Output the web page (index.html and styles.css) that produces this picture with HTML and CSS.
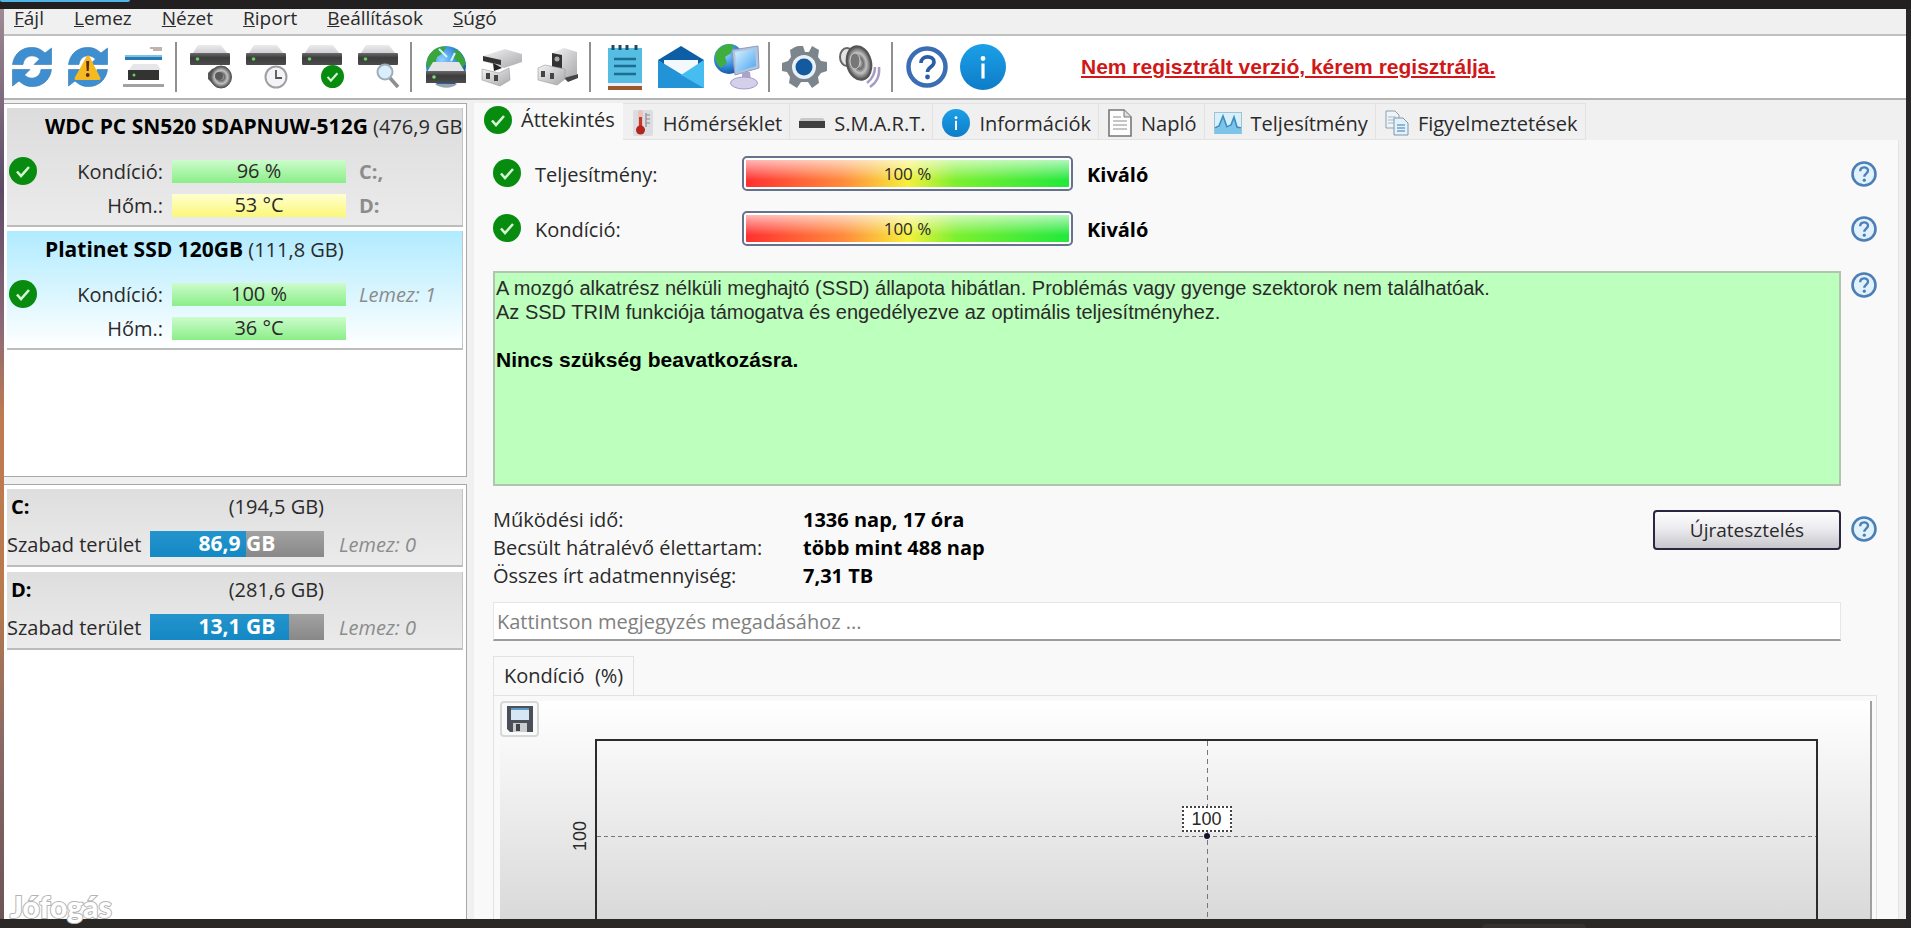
FILE: index.html
```html
<!DOCTYPE html>
<html lang="hu">
<head>
<meta charset="utf-8">
<title>Lemez állapot</title>
<link rel="stylesheet" href="styles.css">
</head>
<body>
<svg class="defs" aria-hidden="true">
  <defs>
    <linearGradient id="gBlue" x1="0" y1="0" x2="0" y2="1"><stop offset="0" stop-color="#1aa0e8"/><stop offset="1" stop-color="#0f7cc8"/></linearGradient>
    <linearGradient id="gDrive" x1="0" y1="0" x2="0" y2="1"><stop offset="0" stop-color="#6a6a6a"/><stop offset=".4" stop-color="#3c3c3c"/><stop offset="1" stop-color="#4c4c4c"/></linearGradient>
    <linearGradient id="gLight" x1="0" y1="0" x2="0" y2="1"><stop offset="0" stop-color="#ececee"/><stop offset="1" stop-color="#d0d0d4"/></linearGradient>
    <linearGradient id="gMetal" x1="0" y1="0" x2="1" y2="1"><stop offset="0" stop-color="#f4f4f4"/><stop offset="1" stop-color="#a8a8ac"/></linearGradient>
    <radialGradient id="gGlobe" cx=".4" cy=".35" r=".7"><stop offset="0" stop-color="#8fd0ff"/><stop offset=".6" stop-color="#2f86d8"/><stop offset="1" stop-color="#174f9a"/></radialGradient>
    <radialGradient id="gCone"><stop offset="0" stop-color="#d8d8d8"/><stop offset=".35" stop-color="#6c6c6c"/><stop offset=".6" stop-color="#c2c2c2"/><stop offset="1" stop-color="#4c4c4c"/></radialGradient>
    <linearGradient id="gScreen" x1="0" y1="0" x2="1" y2="1"><stop offset="0" stop-color="#d8f2ff"/><stop offset="1" stop-color="#4aa4f0"/></linearGradient>
  </defs>
  <symbol id="check" viewBox="0 0 28 28"><circle cx="14" cy="14" r="14" fill="#078c10"/><path d="M8 14.500l4 4.500 8-9" fill="none" stroke="#d6f5d0" stroke-width="2.600"/></symbol>
  <symbol id="help" viewBox="0 0 26 26"><circle cx="13" cy="13" r="11.500" fill="#e2f2fd" stroke="#4b7fb5" stroke-width="2.600"/><path d="M9.200 10.200c0-5 7.800-5 7.800-.6 0 3-3.700 3-3.700 6.200" fill="none" stroke="#4b7fb5" stroke-width="2.400"/><circle cx="13.300" cy="19.200" r="1.600" fill="#4b7fb5"/></symbol>
  <symbol id="info" viewBox="0 0 46 46"><circle cx="23" cy="23" r="23" fill="url(#gBlue)"/><circle cx="23" cy="14.500" r="2.400" fill="#fff"/><path d="M23 19.500v15" stroke="#fff" stroke-width="3.200"/></symbol>
  <symbol id="refresh" viewBox="0 0 40 40"><g fill="#3f8fd0" stroke="#2f77b4" stroke-width=".6"><path d="M.5 17.500C2 6 11 0 20 .5c6 0 9 2 13 5.500L39.500 1v16.500H22l5.500-5.500C21 6 12 9 11 17.500z"/><path d="M39.500 22.500C38 34 29 40 20 39.500c-6 0-9-2-13-5.500L.5 39V22.500H18L12.500 28C19 34 28 31 29 22.500z"/></g></symbol>
  <symbol id="drive" viewBox="0 0 40 20"><path d="M8 0h23l6 8H3z" fill="url(#gLight)"/><rect y="8" width="40" height="12" rx="1" fill="url(#gDrive)"/><circle cx="7.500" cy="14" r="1.800" fill="#5fd35a"/></symbol>
</svg>

<div class="desktop">
  <div class="top-edge"><span class="edge-tab"></span></div>
  <div class="window">
    <nav class="menu">
      <button><u>F</u>ájl</button><button><u>L</u>emez</button><button><u>N</u>ézet</button><button><u>R</u>iport</button><button><u>B</u>eállítások</button><button><u>S</u>úgó</button>
    </nav>

    <div class="toolbar">
      <button aria-label="Frissítés"><svg width="40" height="40"><use href="#refresh"/></svg></button>
      <button aria-label="Figyelmeztetés"><svg width="40" height="40" viewBox="0 0 40 40"><use href="#refresh"/><path d="M20 10L31 31.500H8z" fill="#f5b921" stroke="#f5b921" stroke-width="3" stroke-linejoin="round"/><path d="M18.200 14h3l-.5 10h-2z" fill="#5b2a10"/><circle cx="19.700" cy="28" r="1.900" fill="#5b2a10"/></svg></button>
      <button aria-label="Lemezek"><svg width="42" height="42" viewBox="0 0 42 42"><path d="M27 2h12M30 4h9" stroke="#b09a94" stroke-width="1.500"/><rect x="2" y="9" width="37" height="5" fill="#2b79b0"/><rect x="2" y="9" width="37" height="2" fill="#7cc3ea"/><path d="M10 18h24l4 6H6z" fill="#e6e6e8"/><rect x="5" y="24" width="31" height="10" fill="#333"/><circle cx="11" cy="29" r="1.500" fill="#5fd35a"/><rect x="0" y="38" width="41" height="3" fill="#a2a2a2"/></svg></button>
      <span class="sep"></span>
      <button aria-label="Hang"><svg width="42" height="44" viewBox="0 0 42 44"><use href="#drive" width="40" height="20"/><path d="M18 28l4-4 8-3v22l-8-5-4-4z" fill="#555"/><ellipse cx="31" cy="32" rx="10.500" ry="11" fill="url(#gCone)" stroke="#555"/><circle cx="29" cy="31" r="4" fill="#5a5a5a"/></svg></button>
      <button aria-label="Ütemezés"><svg width="42" height="44" viewBox="0 0 42 44"><use href="#drive" width="40" height="20"/><circle cx="30" cy="32" r="10.500" fill="#f4f4f6" stroke="#a0a0a4" stroke-width="2"/><path d="M30 25v8h6" fill="none" stroke="#555" stroke-width="1.800"/></svg></button>
      <button aria-label="Ellenőrzés"><svg width="42" height="44" viewBox="0 0 42 44"><use href="#drive" width="40" height="20"/><use href="#check" x="19" y="20" width="23" height="23"/></svg></button>
      <button aria-label="Keresés"><svg width="42" height="44" viewBox="0 0 42 44"><use href="#drive" width="40" height="20"/><path d="M32 33l8 9" stroke="#8f8f93" stroke-width="3.500"/><circle cx="27" cy="27" r="7.500" fill="#d9effc" stroke="#9dadba" stroke-width="2"/></svg></button>
      <span class="sep"></span>
      <button aria-label="Hálózat"><svg width="42" height="44" viewBox="0 0 42 44"><circle cx="21" cy="21" r="20" fill="url(#gGlobe)"/><path d="M3 12C8 3 16 0 21 2l-3 6-6 4-2 7-8 4c-1-4 0-8 1-11zM30 4c6 3 9 8 11 15l-5 4-4-7-4-4z" fill="#3aa53a"/><path d="M14 4l8 8M30 8l-4 8" stroke="#d7f2ff" stroke-width="2"/><path d="M8 17h26l6 10H2z" fill="#e3e4e8"/><rect x="1" y="26" width="40" height="12" fill="url(#gDrive)"/><circle cx="9" cy="32" r="1.800" fill="#7be070"/><path d="M10 39c6 5 17 5 22 0z" fill="#9aa4ae"/></svg></button>
      <button aria-label="Kábel"><svg width="42" height="40" viewBox="0 0 42 40"><path d="M2 9L24 2l17 5v8l-18 6L2 14z" fill="url(#gMetal)"/><path d="M2 9l18 4v5L2 14z" fill="#333"/><path d="M12 16l9 5-8 3z" fill="#222"/><path d="M1 22l17 4 10-5 1 12-10 6L1 33z" fill="url(#gMetal)" stroke="#999" stroke-width=".6"/><rect x="5" y="26" width="4" height="6" fill="#444"/><rect x="13" y="28" width="4" height="6" fill="#444"/></svg></button>
      <button aria-label="Csatlakozó"><svg width="42" height="40" viewBox="0 0 42 40"><path d="M15 6l12-5 13 4v22l-14 5-11-6z" fill="url(#gMetal)"/><path d="M15 6l10 2v14l-10-2z" fill="#333"/><circle cx="20" cy="12" r="2.500" fill="#aaa"/><path d="M27 31l14-4v4l-10 4z" fill="#444"/><path d="M1 21l7-3 20 4v10l-8 6L1 33z" fill="url(#gMetal)" stroke="#999" stroke-width=".6"/><rect x="4" y="24" width="4" height="6" fill="#444"/><rect x="13" y="26" width="4" height="6" fill="#444"/></svg></button>
      <span class="sep"></span>
      <button aria-label="Jegyzet"><svg width="36" height="46" viewBox="0 0 36 46"><rect x="1" y="4" width="34" height="38" fill="#55bde2"/><path d="M6 1v5M13 1v5M20 1v5M29 1v5" stroke="#1b4c66" stroke-width="3"/><path d="M7 15h22M7 22h22M7 30h22" stroke="#1c6d91" stroke-width="2.400"/><rect x="1" y="39" width="34" height="3" fill="#eef"/><rect x="1" y="42" width="34" height="4" fill="#9a5a2c"/></svg></button>
      <button aria-label="Levél"><svg width="46" height="44" viewBox="0 0 46 44"><path d="M0 15L23 1l23 14v10H0z" fill="#0e5ea6"/><path d="M6 15h34v14H6z" fill="#f2f8fc"/><path d="M0 15l23 17L46 15v28H0z" fill="#38aee6"/><path d="M0 15l23 14 23 14H0z" fill="#2393d8"/><path d="M46 15v28L23 30z" fill="#45bdf0"/></svg></button>
      <button aria-label="Távoli gép"><svg width="46" height="46" viewBox="0 0 46 46"><circle cx="15" cy="15" r="15" fill="url(#gGlobe)"/><path d="M2 8C7 1 14-1 20 1l-3 8-6 4 2 6-6 5c-5-4-7-11-5-16z" fill="#3fae3c"/><path d="M18 6l26-4 1 22-24 7z" fill="#b4c4dc" stroke="#8b9cc0"/><path d="M21 8l20-3 1 17-19 6z" fill="url(#gScreen)"/><path d="M28 28h8l1 8h-9z" fill="#a9a6cc"/><ellipse cx="30" cy="39" rx="13.500" ry="6" fill="#d5d0ea" stroke="#a39cc4"/></svg></button>
      <span class="sep"></span>
      <button aria-label="Beállítások"><svg width="46" height="44" viewBox="0 0 46 44"><path d="M17 1h5l2 6h4l3-6 7 4-1 7 3 4 6 1v9l-6 2-3 4 1 6-7 5-4-6h-7l-4 6-8-5 1-6-3-5-5-1v-8l6-2 3-4-1-7 5-3z" fill="#7d858c"/><circle cx="23" cy="22" r="12" fill="#e8f1fa"/><circle cx="23" cy="22" r="8.500" fill="#135a9e"/></svg></button>
      <button aria-label="Hangszóró"><svg width="46" height="44" viewBox="0 0 46 44"><path d="M30 38c5-4 8-9 8-16M33 42c6-4 10-11 9-20" fill="none" stroke="#a79cc4" stroke-width="2.500"/><ellipse cx="10" cy="12" rx="7" ry="9" fill="#e4e4e4" stroke="#666" stroke-width="2"/><ellipse cx="22" cy="18" rx="12" ry="17" transform="rotate(-14 22 18)" fill="url(#gCone)" stroke="#555" stroke-width="2"/><ellipse cx="18" cy="16" rx="5" ry="8" fill="#777" stroke="#ccc"/></svg></button>
      <span class="sep"></span>
      <button aria-label="Súgó"><svg width="42" height="42" viewBox="0 0 42 42"><circle cx="21" cy="21" r="18.500" fill="#fff" stroke="#3b6db5" stroke-width="4.500"/><path d="M15 17c0-8 13-8 13-1 0 5-6.500 5-6.500 10" fill="none" stroke="#2a5ca8" stroke-width="3.600"/><circle cx="21.500" cy="31" r="2.400" fill="#2a5ca8"/></svg></button>
      <button aria-label="Névjegy"><svg width="46" height="46"><use href="#info"/></svg></button>
      <a class="register" href="#">Nem regisztrált verzió, kérem regisztrálja.</a>
    </div>

    <div class="content">
      <aside class="side">
        <section class="list disks">
          <article class="disk">
            <h2><b>WDC PC SN520 SDAPNUW-512G</b> (476,9 GB)</h2>
            <svg class="state" width="28" height="28"><use href="#check"/></svg>
            <span class="lab">Kondíció:</span><span class="meter good">96 %</span><b class="drv">C:,</b>
            <span class="lab">Hőm.:</span><span class="meter warm">53 °C</span><b class="drv">D:</b>
          </article>
          <article class="disk selected">
            <h2><b>Platinet SSD 120GB</b> (111,8 GB)</h2>
            <svg class="state" width="28" height="28"><use href="#check"/></svg>
            <span class="lab">Kondíció:</span><span class="meter good">100 %</span><i class="num">Lemez: 1</i>
            <span class="lab">Hőm.:</span><span class="meter good">36 °C</span><span></span>
          </article>
        </section>
        <section class="list parts">
          <article class="part">
            <b>C:</b><span class="size">(194,5 GB)</span><span></span>
            <span>Szabad terület</span><span class="usage"><span class="fill" style="width:55%"></span><b>86,9 GB</b></span><i class="num">Lemez: 0</i>
          </article>
          <article class="part">
            <b>D:</b><span class="size">(281,6 GB)</span><span></span>
            <span>Szabad terület</span><span class="usage"><span class="fill" style="width:80%"></span><b>13,1 GB</b></span><i class="num">Lemez: 0</i>
          </article>
        </section>
      </aside>

      <main class="main">
        <div class="tabs" role="tablist">
          <button class="tab active" role="tab"><svg width="28" height="28"><use href="#check"/></svg>Áttekintés</button>
          <button class="tab" role="tab"><svg width="22" height="28" viewBox="0 0 22 28"><rect x="1" y="1" width="20" height="26" rx="2" fill="#dcdde0"/><path d="M14 4v14M14 6h4M14 10h4M14 14h4" stroke="#8c8c90" stroke-width="1.200"/><rect x="6" y="1" width="5" height="19" rx="2" fill="#e9c2bd"/><rect x="7" y="8" width="3" height="12" fill="#c0392b"/><circle cx="8.500" cy="21" r="4.500" fill="#b3261c"/></svg>Hőmérséklet</button>
          <button class="tab" role="tab"><svg width="26" height="10" viewBox="0 0 26 10"><path d="M2 0h22l2 3H0z" fill="#c8c8c8"/><rect y="3" width="26" height="7" fill="#404040"/></svg>S.M.A.R.T.</button>
          <button class="tab" role="tab"><svg width="28" height="28"><use href="#info"/></svg>Információk</button>
          <button class="tab" role="tab"><svg width="24" height="28" viewBox="0 0 24 28"><path d="M1 1h15l7 7v19H1z" fill="#fdfdfd" stroke="#77777b" stroke-width="1.600"/><path d="M16 1v7h7" fill="#ddd" stroke="#77777b"/><path d="M5 8h8M5 12h14M5 16h14M5 20h14" stroke="#b4b4b8" stroke-width="1.400"/></svg>Napló</button>
          <button class="tab" role="tab"><svg width="28" height="22" viewBox="0 0 28 22"><rect x=".5" y=".5" width="27" height="21" fill="#d9f0fb" stroke="#9cc4d8"/><path d="M1 17l4-2 4-10 4 11 4-2 3-9 3 10 4 2v5H1z" fill="#7cc4ea"/><path d="M1 16l4-2 4-10 4 11 4-2 3-8 3 10 4 1" fill="none" stroke="#3a8cc0" stroke-width="1.600"/></svg>Teljesítmény</button>
          <button class="tab" role="tab"><svg width="24" height="26" viewBox="0 0 24 26"><path d="M1 1h9l4 4v13H1z" fill="#eef4f8" stroke="#8aa0b0"/><path d="M3 7h8M3 10h8M3 13h8" stroke="#a4b8c6"/><path d="M9 8h9l5 5v12H9z" fill="#e4f1fa" stroke="#7c98ac"/><path d="M12 15h8M12 18h8M12 21h8" stroke="#6fa4c8" stroke-width="1.400"/></svg>Figyelmeztetések</button>
        </div>

        <div class="panel">
          <div class="score">
            <svg width="28" height="28"><use href="#check"/></svg><span class="name">Teljesítmény:</span><span class="rainbow">100 %</span><b>Kiváló</b>
          </div>
          <button class="help" aria-label="Súgó"><svg width="26" height="26"><use href="#help"/></svg></button>
          <div class="score">
            <svg width="28" height="28"><use href="#check"/></svg><span class="name">Kondíció:</span><span class="rainbow">100 %</span><b>Kiváló</b>
          </div>
          <button class="help" aria-label="Súgó"><svg width="26" height="26"><use href="#help"/></svg></button>

          <div class="report">
            <p>A mozgó alkatrész nélküli meghajtó (SSD) állapota hibátlan. Problémás vagy gyenge szektorok nem találhatóak.<br>Az SSD TRIM funkciója támogatva és engedélyezve az optimális teljesítményhez.</p>
            <p><b>Nincs szükség beavatkozásra.</b></p>
          </div>
          <button class="help report-help" aria-label="Súgó"><svg width="26" height="26"><use href="#help"/></svg></button>

          <div class="facts">
            <dl>
              <dt>Működési idő:</dt><dd>1336 nap, 17 óra</dd>
              <dt>Becsült hátralévő élettartam:</dt><dd>több mint 488 nap</dd>
              <dt>Összes írt adatmennyiség:</dt><dd>7,31 TB</dd>
            </dl>
            <button class="retest">Újratesztelés</button>
          </div>
          <button class="help retest-help" aria-label="Súgó"><svg width="26" height="26"><use href="#help"/></svg></button>

          <input class="note" type="text" aria-label="Megjegyzés" placeholder="Kattintson megjegyzés megadásához ...">

          <div class="chart-box">
            <div class="chart-tab">Kondíció&nbsp; (%)</div>
            <div class="chart-frame">
              <div class="chart">
                <button class="save" aria-label="Mentés"><svg width="26" height="26" viewBox="0 0 26 26"><path d="M0 0h26v26H3l-3-3z" fill="#4b5058"/><rect x="4" y="2" width="18" height="12" fill="#d6e6f2"/><rect x="4" y="2" width="18" height="2" fill="#5a9ac8"/><rect x="6" y="17" width="14" height="9" fill="#c9ccd0"/><rect x="9" y="18" width="4" height="7" fill="#444"/></svg></button>
                <div class="axis"><span>100</span></div>
                <div class="plot">
                  <span class="hline"></span><span class="vline"></span><span class="dot"></span><span class="value">100</span>
                </div>
              </div>
            </div>
          </div>
        </div>
      </main>
    </div>
  </div>
  <div class="bottom-edge"><span class="edge-bump"></span></div>
  <span class="watermark">Jófogás</span>
</div>
</body>
</html>
```
FILE: styles.css
```css
* { box-sizing: border-box; }

body {
  margin: 0;
  font-family: "Open Sans", "Noto Sans", sans-serif;
  font-size: 20px;
  color: #2a2a2a;
}

button {
  font: inherit;
  color: inherit;
  background: none;
  border: 0;
  padding: 0;
}

svg { display: block; flex: none; }
.defs { position: absolute; width: 0; height: 0; }

.desktop {
  position: relative;
  height: 100vh;
  display: flex;
  flex-direction: column;
  background: #2a2727;
  overflow: hidden;
}

.top-edge { height: 9px; flex: none; background: #211f1f; }
.edge-tab { display: block; width: 130px; height: 2px; background: #4fb4e8; border-radius: 0 0 4px 4px; }
.bottom-edge { height: 9px; flex: none; display: flex; justify-content: flex-end; align-items: flex-end; padding-right: 17%; }
.edge-bump { width: 104px; height: 4px; background: #343131; border-radius: 4px 4px 0 0; }

.window {
  flex: 1;
  min-height: 0;
  display: flex;
  flex-direction: column;
  margin-right: 5px;
  background: #f0f0f0;
  border-left: 4px solid;
  border-image: linear-gradient(#a08a94, #5d4a66 20%, #8c6a78 35%, #c07a50 45%, #b87a4c 65%, #8a6a64 80%, #6c5458) 1;
}

/* menu and toolbar */
.menu {
  height: 27px;
  flex: none;
  display: flex;
  align-items: center;
  gap: 30px;
  padding: 0 10px 8px;
  border-bottom: 2px solid #c0c0c0;
  font-size: 19px;
  line-height: 18px;
}

.toolbar {
  height: 64px;
  flex: none;
  display: flex;
  align-items: center;
  background: #fff;
  border-bottom: 2px solid #b4b4b4;
}
.toolbar button { width: 56px; display: flex; justify-content: center; flex: none; }
.sep { width: 11px; flex: none; height: 50px; background: linear-gradient(#909090, #909090) 3px 0 / 2px 100% no-repeat; }
.register {
  margin-left: 70px;
  font: bold 21px "Liberation Sans", Arial, sans-serif;
  color: #d01818;
  white-space: nowrap;
}

/* left side */
.content { flex: 1; min-height: 0; display: flex; padding-top: 3px; }
.side { width: 463px; flex: none; display: flex; flex-direction: column; gap: 7px; }
.list {
  background: #fff;
  border: 1px solid #a8a8a8;
  border-width: 1px 1px 1px 0;
  padding: 4px 3px 0;
}
.disks { height: 374px; flex: none; }
.parts { flex: 1; border-bottom: 0; }

.disk {
  display: grid;
  grid-template-columns: 28px 117px 174px 1fr;
  grid-template-rows: 46px 34px 34px;
  column-gap: 9px;
  align-items: center;
  height: 119px;
  margin-bottom: 4px;
  padding-left: 2px;
  background: linear-gradient(#dcdcdc, #ebebeb);
  border-bottom: 2px solid #bcbcbc;
  border-right: 1px solid #c4c4c4;
  overflow: hidden;
}
.disk.selected { background: linear-gradient(#b0ebff, #fff); }
.disk h2 {
  grid-column: 1 / -1;
  align-self: start;
  margin: 0;
  padding-left: 36px;
  font-size: inherit;
  font-weight: normal;
  line-height: 36px;
  white-space: nowrap;
}
.disk h2 b { font-size: 21px; }
.disk h2 b, .part > b { color: #000; }
.disk .state { grid-column: 1; grid-row: 2; }
.disk .lab { grid-column: 2; text-align: right; }
.meter { height: 23px; line-height: 22px; text-align: center; }
.good { background: linear-gradient(#ccfccc, #8bee88); }
.warm { background: linear-gradient(#ffffd0, #fbf878); }
.drv, .num { padding-left: 4px; color: #8c8c8c; }

.part {
  display: grid;
  grid-template-columns: 134px 174px 1fr;
  grid-template-rows: 35px 40px;
  column-gap: 9px;
  align-items: center;
  height: 78px;
  margin-bottom: 5px;
  background: linear-gradient(#dedede, #ebebeb);
  border-bottom: 2px solid #bcbcbc;
  border-right: 1px solid #c4c4c4;
  white-space: nowrap;
}
.part > b { padding-left: 4px; }
.part .num { padding-left: 6px; }
.size { text-align: right; }
.usage {
  position: relative;
  height: 26px;
  line-height: 25px;
  text-align: center;
  color: #fff;
  background: linear-gradient(#a2a2a2, #888);
}
.usage .fill { position: absolute; inset: 0 auto 0 0; background: linear-gradient(#2494cc, #1488c4); }
.usage b { position: relative; font-size: 21px; }

/* right side */
.main { flex: 1; min-width: 0; display: flex; flex-direction: column; margin: 0 7px 0 7px; }
.tabs { display: flex; flex: none; height: 37px; align-items: stretch; }
.tab {
  display: flex;
  align-items: center;
  gap: 9px;
  padding: 3px 7px 0 9px;
  border: 1px solid #e2e2e2;
  border-left: 0;
  white-space: nowrap;
}
.tab.active { background: #f9f9f9; border-color: #f9f9f9; padding: 0 7px 4px 10px; }

.panel {
  flex: 1;
  min-height: 0;
  display: grid;
  grid-template-columns: 1fr 26px;
  grid-template-rows: 55px 55px 230px 116px 39px 1fr;
  column-gap: 10px;
  padding: 6px 21px 0 19px;
  background: #f9f9f9;
  border-right: 1px solid #e4e4e4;
}
.score { display: flex; align-items: center; padding-bottom: 1px; }
.score .name { width: 207px; margin-left: 14px; padding-top: 3px; }
.score b { margin-left: 14px; padding-top: 3px; color: #000; }
.rainbow {
  width: 331px;
  height: 35px;
  border: 2px solid #66728a;
  border-radius: 5px;
  padding: 2px;
  line-height: 27px;
  font-size: 17px;
  text-align: center;
  background:
    linear-gradient(rgba(255,255,255,.65), rgba(255,255,255,0) 75%) content-box,
    linear-gradient(90deg, #ff3030, #ff8a3c 30%, #f6f03c 50%, #7cf030 65%, #22e83c) content-box,
    #fff;
}
.help { align-self: center; }

.report {
  margin-top: 15px;
  background: #bdffbd;
  border: 2px solid #b0c4b0;
  padding: 3px 1px;
  font: 20px/24px "Liberation Sans", Arial, sans-serif;
}
.report p { margin: 0 0 24px; }
.report b { font-size: 21px; color: #000; }
.report-help { align-self: start; padding-top: 16px; }

.facts { display: flex; justify-content: space-between; align-items: flex-start; padding-top: 20px; }
.facts dl { margin: 0; display: grid; grid-template-columns: 310px auto; line-height: 28px; }
.facts dd { margin: 0; font-weight: bold; color: #000; }
.retest {
  width: 188px;
  height: 40px;
  margin-top: 4px;
  border: 2px solid #2c2640;
  border-radius: 4px;
  font-size: 19px;
  background: linear-gradient(#fdfdfd, #ececf0 45%, #c8c8cc);
}
.retest-help { align-self: start; padding-top: 30px; }

.note {
  grid-column: 1;
  width: 100%;
  height: 39px;
  padding: 0 3px;
  font: inherit;
  background: #fff;
  border: 1px solid #e6e6e6;
  border-bottom: 2px solid #9c9c9c;
}
.note::placeholder { color: #808080; }

.chart-box { grid-column: 1 / -1; display: flex; flex-direction: column; min-height: 0; padding-top: 15px; }
.chart-tab {
  align-self: flex-start;
  height: 39px;
  padding: 0 10px;
  line-height: 38px;
  border: 1px solid #e2e2e2;
  border-bottom: 0;
}
.chart-frame { flex: 1; display: flex; padding: 5px 4px 0 6px; border: 1px solid #e2e2e2; border-bottom: 0; min-height: 0; }
.chart {
  flex: 1;
  display: grid;
  grid-template-columns: 40px 55px 1fr;
  grid-template-rows: 38px 1fr;
  padding-right: 52px;
  background: linear-gradient(#fff, #f6f6f6 25%, #d9d9d9);
  border-right: 2px solid #a0a0a0;
}
.save {
  width: 39px;
  height: 36px;
  display: flex;
  align-items: center;
  justify-content: center;
  border: 2px solid #d8d8d8;
  border-radius: 4px;
  background: #fafafa;
}
.axis { grid-column: 2; grid-row: 2; display: flex; justify-content: flex-end; align-items: flex-start; padding: 82px 5px 0 0; }
.axis span { writing-mode: vertical-rl; transform: rotate(180deg); font: 18px/20px "Liberation Sans", Arial, sans-serif; }
.plot { position: relative; grid-column: 3; grid-row: 2; border: 2px solid #2c2c2c; border-bottom: 0; }
.hline { position: absolute; left: 0; right: 0; top: 95px; height: 1px; background: repeating-linear-gradient(90deg, #777 0 4px, transparent 4px 7px); }
.vline { position: absolute; top: 0; bottom: 0; left: 50%; width: 1px; background: repeating-linear-gradient(#777 0 5px, transparent 5px 9px); }
.dot { position: absolute; left: 50%; top: 95px; width: 6px; height: 6px; margin: -3px; border-radius: 50%; background: #15122e; }
.value {
  position: absolute;
  left: 50%;
  top: 65px;
  width: 50px;
  height: 26px;
  margin-left: -25px;
  border: 2px dotted #444;
  background: #fff;
  text-align: center;
  font: 18px/22px "Liberation Sans", Arial, sans-serif;
}

.watermark {
  position: absolute;
  left: 10px;
  bottom: 4px;
  font: 900 30px/36px Lato, sans-serif;
  color: #fff;
  -webkit-text-stroke: 2px #b4b4b4;
  paint-order: stroke fill;
}
```
